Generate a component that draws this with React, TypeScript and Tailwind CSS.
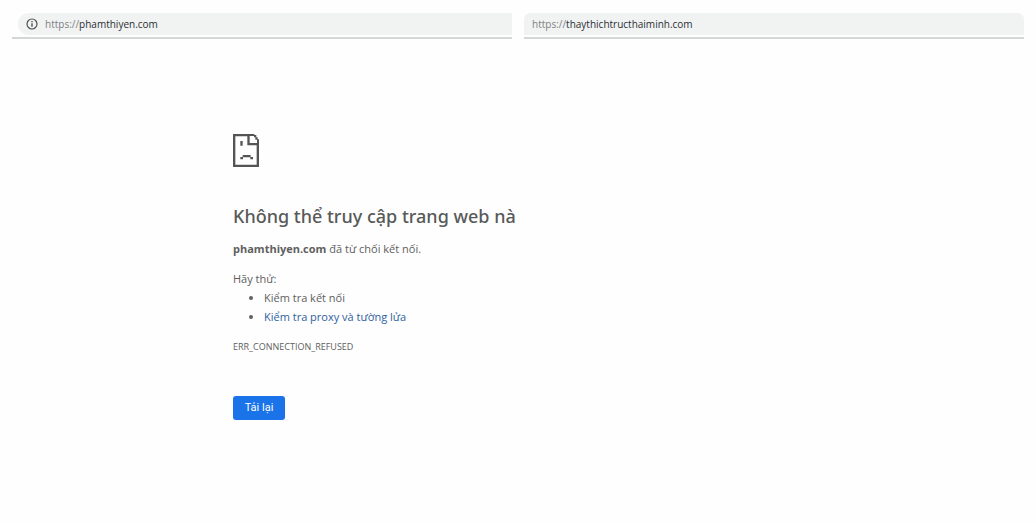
import React from "react";

function InfoIcon() {
  return (
    <svg viewBox="0 0 12 12" className="size-3 shrink-0" fill="none" stroke="#4f5357" aria-hidden="true">
      <circle cx="6" cy="6" r="5" strokeWidth="1.2" />
      <path d="M6 5.2v3.5M6 3v1.3" strokeWidth="1.4" />
    </svg>
  );
}

function SadPageIcon() {
  return (
    <svg viewBox="0 0 78 99" className="h-[33px] w-[26px]" fill="#545454" aria-hidden="true">
      <path d="M0 0H64V6H50V27H78V99H0ZM7 7V92H71V34H43V7Z" fillRule="evenodd" />
      <path d="M63 3h7v7h-7zM67 10h7v7h-7zM72 16h6v12h-6z" />
      <path d="M22 21h7v14h-7zM29 63h24v7H29zM22 69h8v7h-8zM52 69h8v7h-8z" />
    </svg>
  );
}

type AddressProps = { id: string; host: string; info?: boolean };

function AddressBar({ id, host, info }: AddressProps) {
  return (
    <div className={`flex border-b-2 border-[#d5d6d7] pb-0.5 ${info ? "pl-1.5" : ""}`}>
      <div
        className={`flex h-[22px] min-w-0 flex-1 items-center bg-[#f1f3f3] pl-2 text-[10px] ${
          info ? "rounded-l-full rounded-tr-md" : "rounded-t-md"
        }`}
      >
        {info && <InfoIcon />}
        <label htmlFor={id} className={`text-[#7d8184] ${info ? "ml-[7px]" : ""}`}>
          https://
        </label>
        <input
          id={id}
          type="text"
          defaultValue={host}
          className="min-w-0 flex-1 bg-transparent text-[#2b2e32] outline-none"
        />
      </div>
    </div>
  );
}

export default function App() {
  return (
    <div className="grid min-h-screen grid-cols-2 gap-3 bg-[#fefefe] px-3 pt-[13px] font-['Open_Sans','Noto_Sans',sans-serif] text-[11px] text-[#606060]">
      <section className="min-w-0">
        <AddressBar id="first-address" host="phamthiyen.com" info />
        <main className="pt-[95px] pl-[221px]">
          <SadPageIcon />
          <h1 className="mt-[35px] font-['Noto_Sans','Open_Sans',sans-serif] text-lg leading-7 font-medium whitespace-nowrap text-[#585a59]">
            Không thể truy cập trang web nà
          </h1>
          <p className="mt-[9px] leading-5">
            <strong className="font-bold">phamthiyen.com</strong> đã từ chối kết nối.
          </p>
          <p className="mt-[11px] leading-[18px]">Hãy thử:</p>
          <ul className="list-disc pl-[31px] leading-[19px]">
            <li>Kiểm tra kết nối</li>
            <li>
              <a href="#proxy" className="text-[#2f609f]">
                Kiểm tra proxy và tường lửa
              </a>
            </li>
          </ul>
          <p className="mt-3 text-[9px] leading-[18px]">ERR_CONNECTION_REFUSED</p>
          <button
            type="button"
            className="mt-10 h-6 w-[52px] rounded-[3px] bg-[#1a73e8] font-['Roboto',sans-serif] text-[11px] text-white"
          >
            Tải lại
          </button>
        </main>
      </section>
      <section className="min-w-0">
        <AddressBar id="second-address" host="thaythichtructhaiminh.com" />
      </section>
    </div>
  );
}
